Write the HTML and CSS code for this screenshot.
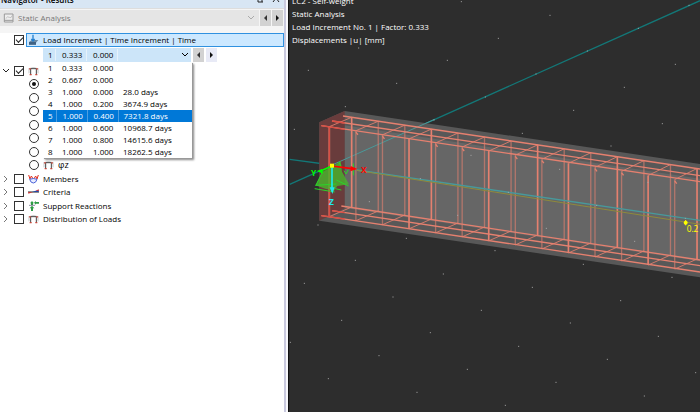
FILE: index.html
```html
<!DOCTYPE html>
<html lang="en">
<head>
<meta charset="utf-8">
<title>Navigator - Results</title>
<link rel="stylesheet" href="styles.css">
</head>
<body>
<svg class="defs" aria-hidden="true">
  <symbol id="frame" viewBox="0 0 33 30">
    <path d="M4 8Q16 1 29 8M3 6V22M30 6V22" fill="none" stroke="#aaa" stroke-width="2"/>
    <path d="M8 26V8H25V26" fill="none" stroke="#444" stroke-width="3"/>
    <path d="M5 24h6v4H5zM22 24h6v4h-6zM4 6h4v5H4zM25 6h4v5h-4z" fill="#c8483c"/>
  </symbol>
  <symbol id="chevron-right" viewBox="0 0 6 10"><path d="M1 2l3 3-3 3" fill="none" stroke="#777" stroke-width="1"/></symbol>
  <symbol id="chevron-down" viewBox="0 0 10 6"><path d="M2 1l3 3 3-3" fill="none" stroke="currentColor" stroke-width="1"/></symbol>
</svg>
<div class="app">
  <aside class="navigator">
    <header class="titlebar">
      <h1>Navigator - Results</h1>
      <svg class="window-icons" viewBox="0 0 24 8"><path d="M2 0v5M6 0v5M2 5h5M17 5l3-4 3 4" fill="none" stroke="#222" stroke-width="1"/></svg>
    </header>
    <div class="toolbar">
      <label class="analysis">
        <svg class="analysis-icon" viewBox="0 0 33 30"><path d="M4 3h26v24H4zM4 22h26" fill="#eee" stroke="#999" stroke-width="3"/><path d="M8 17q6-9 11-4t9-6" fill="none" stroke="#aaa" stroke-width="2"/></svg>
        <select disabled aria-label="Analysis type"><option>Static Analysis</option></select>
        <svg class="arrow" viewBox="0 0 10 6"><use href="#chevron-down"/></svg>
      </label>
      <button class="step" aria-label="Previous analysis"><i class="prev"></i></button>
      <button class="step" aria-label="Next analysis"><i class="next"></i></button>
    </div>
    <div class="root">
      <input type="checkbox" id="increment" checked>
      <label for="increment" class="root-label">
        <svg class="root-icon" viewBox="0 0 33 36"><path d="M3 24l8-6h20l-7 8v6H3z" fill="#6d8ba5"/><path d="M3 24h21v8H3z" fill="#3f6284"/><path d="M15 2v17M10 15l5 6 5-6" fill="none" stroke="#2480d0" stroke-width="4"/></svg>
        Load Increment | Time Increment | Time
      </label>
    </div>
    <div class="picker-row">
      <div class="picker">
        <button class="picker-value" aria-haspopup="listbox" aria-expanded="true">
          <span>1</span><span>0.333</span><span>0.000</span>
          <svg class="arrow" viewBox="0 0 10 6"><use href="#chevron-down"/></svg>
        </button>
        <table class="options">
          <tr><td>1</td><td>0.333</td><td>0.000</td><td></td></tr>
          <tr><td>2</td><td>0.667</td><td>0.000</td><td></td></tr>
          <tr><td>3</td><td>1.000</td><td>0.000</td><td>28.0 days</td></tr>
          <tr><td>4</td><td>1.000</td><td>0.200</td><td>3674.9 days</td></tr>
          <tr class="selected"><td>5</td><td>1.000</td><td>0.400</td><td>7321.8 days</td></tr>
          <tr><td>6</td><td>1.000</td><td>0.600</td><td>10968.7 days</td></tr>
          <tr><td>7</td><td>1.000</td><td>0.800</td><td>14615.6 days</td></tr>
          <tr><td>8</td><td>1.000</td><td>1.000</td><td>18262.5 days</td></tr>
        </table>
      </div>
      <button class="step" aria-label="Previous increment"><i class="prev"></i></button>
      <button class="step light" aria-label="Next increment"><i class="next"></i></button>
    </div>
    <ul class="tree">
      <li><svg class="twisty open" viewBox="0 0 6 6"><path d="M0 1l3 3 3-3" fill="none" stroke="#222"/></svg><input type="checkbox" checked aria-label="Global deformations"><svg class="icon"><use href="#frame"/></svg></li>
      <li class="child"><input type="radio" name="part" checked aria-label="u"></li>
      <li class="child"><input type="radio" name="part" aria-label="uX"></li>
      <li class="child"><input type="radio" name="part" aria-label="uY"></li>
      <li class="child"><input type="radio" name="part" aria-label="uZ"></li>
      <li class="child"><input type="radio" name="part" aria-label="φX"></li>
      <li class="child"><input type="radio" name="part" aria-label="φY"></li>
      <li class="child"><input type="radio" name="part" id="phiz"><svg class="icon"><use href="#frame"/></svg><label for="phiz" class="phi">φz</label></li>
      <li><svg class="twisty"><use href="#chevron-right"/></svg><input type="checkbox" id="members"><svg class="icon" viewBox="0 0 33 30"><path d="M2 3l4 12 4-9 5 8M31 3l-4 12-4-9-5 8" fill="none" stroke="#e03020" stroke-width="3"/><path d="M5 16q11-5 22 0-3 11-11 11T5 16z" fill="#e8ecff" stroke="#4b62d8" stroke-width="3"/></svg><label for="members">Members</label></li>
      <li><svg class="twisty"><use href="#chevron-right"/></svg><input type="checkbox" id="criteria"><svg class="icon" viewBox="0 0 33 30"><path d="M0 15h33" stroke="#222" stroke-width="3"/><path d="M1 15v5l14-5z" fill="#c33"/><path d="M12 15L32 8v7z" fill="#2548a8"/><path d="M23 11l9-4v5z" fill="#d33"/></svg><label for="criteria">Criteria</label></li>
      <li><svg class="twisty"><use href="#chevron-right"/></svg><input type="checkbox" id="support"><svg class="icon" viewBox="0 0 33 30"><path d="M12 0l6 7h-3v5H9V7H6zM12 14l7 8h-4v8H9v-8H5zM18 5l6-5v3h9v5h-9v3z" fill="#2e9c46"/><path d="M3 13h18" stroke="#557" stroke-width="2"/></svg><label for="support">Support Reactions</label></li>
      <li><svg class="twisty"><use href="#chevron-right"/></svg><input type="checkbox" id="loads"><svg class="icon"><use href="#frame"/></svg><label for="loads">Distribution of Loads</label></li>
    </ul>
  </aside>
  <main class="viewport">
    <svg class="scene" viewBox="3 0 1233 1236" preserveAspectRatio="xMinYMin slice">
      <path d="M5 553L1236 2M5 478L132 495" stroke="#137878" stroke-width="4"/>
      <path d="M94 367L170 333L1236 492V832L94 662Z" fill="#585858"/>
      <path d="M170 376L1236 536V784L170 624Z" fill="#666"/>
      <path d="M94 367L170 333V625L94 662Z" fill="#693c3c"/>
      <path d="M132 495L440 358" stroke="#4a9999" stroke-width="3"/>
      <g id="bars" fill="none" stroke="#e5806f">
        <path d="M165 348L1236 507M132 363L1236 527M100 377L1236 545M160 618L1236 780M132 632L1236 797M100 647L1236 816" stroke-width="4"/>
      </g>
      <path d="M205 510L1236 661" stroke="#48999b" stroke-width="4"/>
      <path d="M205 511L1236 673" stroke="#8e8a3c" stroke-width="3"/>
      <path d="M100 377L170 388M132 363L170 369M100 647L170 657M132 632L170 638M124 380V650" stroke="#d94d43" stroke-width="4"/>
      <g>
        <path d="M132 500L158 483 162 515 183 553 148 558 138 572 112 566 82 556 104 515Z" fill="#48b52c" opacity=".8"/>
        <path d="M84 556L104 514M80 566L140 576M82 556L145 552M145 540L182 558M142 566L160 570M152 486L160 500M196 490V526M168 512l6 10 7-13" stroke="#2bd329" stroke-width="3" fill="none"/>
        <path d="M132 498L96 514" stroke="#0f0" stroke-width="5"/><path d="M86 513l16-6 3 14z" fill="#0f0"/>
        <path d="M132 498L192 506" stroke="#f00" stroke-width="5"/><path d="M188 498l20 9-21 7z" fill="#f00"/>
        <path d="M132 498V566" stroke="#1fe9ee" stroke-width="5"/><path d="M125 562h15l-7 20z" fill="#1fe9ee"/>
        <path d="M126 491h12v12h-12z" fill="#ff0"/>
      </g>
      <g class="axis"><text x="69" y="529" fill="#0f0">Y</text><text x="219" y="520" fill="#f00">X</text><text x="123" y="614" fill="#1fe9ee">Z</text></g>
      <circle cx="1193" cy="668" r="6" fill="#ff0"/><path d="M1193 660V676" stroke="#ff0" stroke-width="3"/>
      <text class="value" x="1196" y="696">0.2</text>
      <g id="grid-points" fill="#aaa"></g>
    </svg>
    <div class="caption">
      <p>LC2 - Self-weight</p>
      <p>Static Analysis</p>
      <p>Load Increment No. 1 | Factor: 0.333</p>
      <p>Displacements |u| [mm]</p>
    </div>
  </main>
</div>
<script src="scene.js"></script>
</body>
</html>
```
FILE: styles.css
```css
* { box-sizing: border-box; }
body { margin: 0; background: #fff; color: #000; font: 500 8px/12px "Open Sans", "Noto Sans", sans-serif; }
button, select { font: inherit; color: inherit; border: 0; padding: 0; margin: 0; }
h1, p, ul { margin: 0; padding: 0; }
svg { display: block; flex: none; }
.defs { position: absolute; width: 0; height: 0; }
.app { display: grid; grid-template-columns: 289fr 411fr; min-height: 100vh; overflow: hidden; }

.navigator { border-right: 1px solid #111; box-shadow: inset -2px 0 #f8f8fc, inset -4px 0 #c9c9de; padding-right: 4px; min-width: 0; }
.titlebar { display: flex; justify-content: space-between; height: 8px; background: #d8e6f4; padding: 0 4px 0 1px; overflow: hidden; }
.titlebar h1 { font-size: 8px; font-weight: 600; line-height: 12px; margin-top: -6px; white-space: nowrap; }
.window-icons { width: 24px; height: 8px; margin-top: -3px; }

.toolbar { display: flex; gap: 1px; height: 25px; padding: 1px 1px 7px 0; background: #f5f5f5; border-top: 1px solid #ddd; }
.analysis { display: flex; align-items: center; flex: 1; background: #e5e5e5; padding: 0 3px; color: #aaa; }
.analysis select { flex: 1; appearance: none; background: none; color: #777; opacity: 1; margin-left: 4px; }
.analysis-icon { width: 11px; height: 10px; }
.arrow { width: 10px; height: 6px; }
.step { display: flex; align-items: center; justify-content: center; width: 11px; background: #d2d2d2; }
.step.light { background: #e8eaf6; }
.prev, .next { border: 3px solid transparent; border-left-width: 0; border-right: 3px solid #333; }
.next { border-right-width: 0; border-left: 3px solid #111; }

.root { display: flex; align-items: center; gap: 2px; height: 14px; padding-left: 14px; }
.root-label { display: flex; align-items: center; flex: 1; gap: 4px; height: 14px; background: #cce8ff; border: 1px solid #3091e0; padding-left: 1px; white-space: nowrap; }
.root-icon { width: 11px; height: 12px; }

.picker-row { display: flex; gap: 2px; height: 17px; padding: 1px 0 2px 43px; }
.picker { position: relative; width: 148px; }
.picker-value { display: grid; grid-template-columns: 13px 31px 31px 1fr; align-items: center; justify-items: end; width: 100%; height: 14px; padding-right: 1px; background: #cce5f9; text-align: left; }
.picker-value span { justify-self: stretch; padding-left: 6px; border-right: 1px solid #e6f2fb; }
.picker-value span:first-child { padding-left: 5px; }
.options { position: absolute; top: 14px; left: 0; width: 149px; border-collapse: collapse; table-layout: fixed; background: #fff; box-shadow: 1px 1px #999, 2px 2px 2px #888; z-index: 1; }
.options td { height: 12px; padding: 0 0 0 5px; line-height: 12px; white-space: nowrap; }
.options td:nth-child(1) { width: 13px; }
.options td:nth-child(2), .options td:nth-child(3) { width: 31px; padding-left: 6px; }
.selected { background: #0078d7; color: #fff; }
.selected td:not(:last-child) { border-right: 1px solid #4d9fe2; }

.tree { list-style: none; display: grid; grid-auto-rows: 1fr; height: 162px; }
.tree li { display: flex; align-items: center; gap: 4px; padding-left: 3px; }
.tree .child { padding-left: 29px; }
.twisty { width: 6px; height: 10px; margin-right: 1px; }
.twisty.open { height: 6px; }
.icon { width: 11px; height: 10px; }
.phi { font-size: 9px; }
input { appearance: none; flex: none; display: grid; place-content: center; width: 10px; height: 10px; margin: 0; border: 1px solid #333; background: #fff; }
input[type=radio] { border-radius: 50%; }
input[type=checkbox]:checked::before { content: ""; width: 6px; height: 3px; border: solid #222; border-width: 0 0 1px 1px; transform: translateY(-1px) rotate(-45deg); }
input[type=radio]:checked::before { content: ""; width: 4px; height: 4px; border-radius: 50%; background: #111; }

.viewport { position: relative; overflow: hidden; background: #2d2d2d; }
.scene { position: absolute; inset: 0; width: 100%; height: 100%; }
.scene text { font-family: "Open Sans", sans-serif; }
.axis { font-size: 25px; font-weight: 700; }
.value { font-size: 25px; fill: #ff0; }
.caption { position: relative; margin-top: -6px; padding-left: 3px; color: #fff; line-height: 13px; }
```
FILE: scene.js
```js
const NS = "http://www.w3.org/2000/svg";

function add(parent, d, width, opacity) {
  const path = document.createElementNS(NS, "path");
  path.setAttribute("d", d);
  path.setAttribute("stroke-width", width);
  path.setAttribute("opacity", opacity);
  parent.append(path);
}

// Stirrups: one rear leg, one front leg and the ties between them per spacing.
const bars = document.getElementById("bars");
const rearStrong = [0, 3, 7, 10, 13];
for (let i = 0; i < 14; i++) {
  const rx = 191 + i * 79.7, rt = 352 + i * 11.8, rb = 621 + i * 12;
  const fx = 124 + i * 79.7, ft = 380 + i * 12.2, fb = 650 + i * 12.1;
  const rear = rearStrong.includes(i), front = i % 3 === 0;
  add(bars, `M${rx} ${rt}V${rb}`, rear ? 5 : 4, rear ? 1 : 0.6);
  add(bars, `M${fx} ${ft}V${fb}`, front ? 5 : 4, front ? 1 : 0.6);
  add(bars, `M${fx} ${ft}L${rx} ${rt}M${fx} ${fb}L${rx} ${rb}`, 3, 0.85);
  if (!front) add(bars, `M${fx} ${ft + 4}l6 8`, 4, 1);
}

const points = [
  [520, 5], [786, 46], [631, 115], [478, 181], [212, 144], [61, 211], [326, 250], [1162, 193],
  [1009, 262], [857, 331], [703, 400], [1123, 371], [969, 438], [172, 320], [19, 388], [1203, 16],
  [1051, 85], [898, 153], [744, 222], [592, 291], [438, 360], [549, 466], [815, 508], [1080, 547],
  [397, 536], [661, 577], [926, 616], [1192, 655], [244, 605], [509, 646], [775, 685], [1040, 724],
  [90, 675], [355, 715], [621, 752], [886, 793], [1152, 832], [202, 781], [466, 822], [733, 862],
  [998, 902], [49, 850], [315, 891], [580, 931], [847, 969], [1111, 1009], [161, 961], [427, 998],
  [692, 1039], [958, 1078], [1223, 1118], [7, 1027], [273, 1067], [538, 1108], [804, 1147],
  [1069, 1188], [121, 1136], [387, 1177], [652, 1216]
];
const gridPoints = document.getElementById("grid-points");
for (const [x, y] of points) {
  const dot = document.createElementNS(NS, "rect");
  dot.setAttribute("x", x - 1.5);
  dot.setAttribute("y", y - 1.5);
  dot.setAttribute("width", 3);
  dot.setAttribute("height", 3);
  gridPoints.append(dot);
}
```
